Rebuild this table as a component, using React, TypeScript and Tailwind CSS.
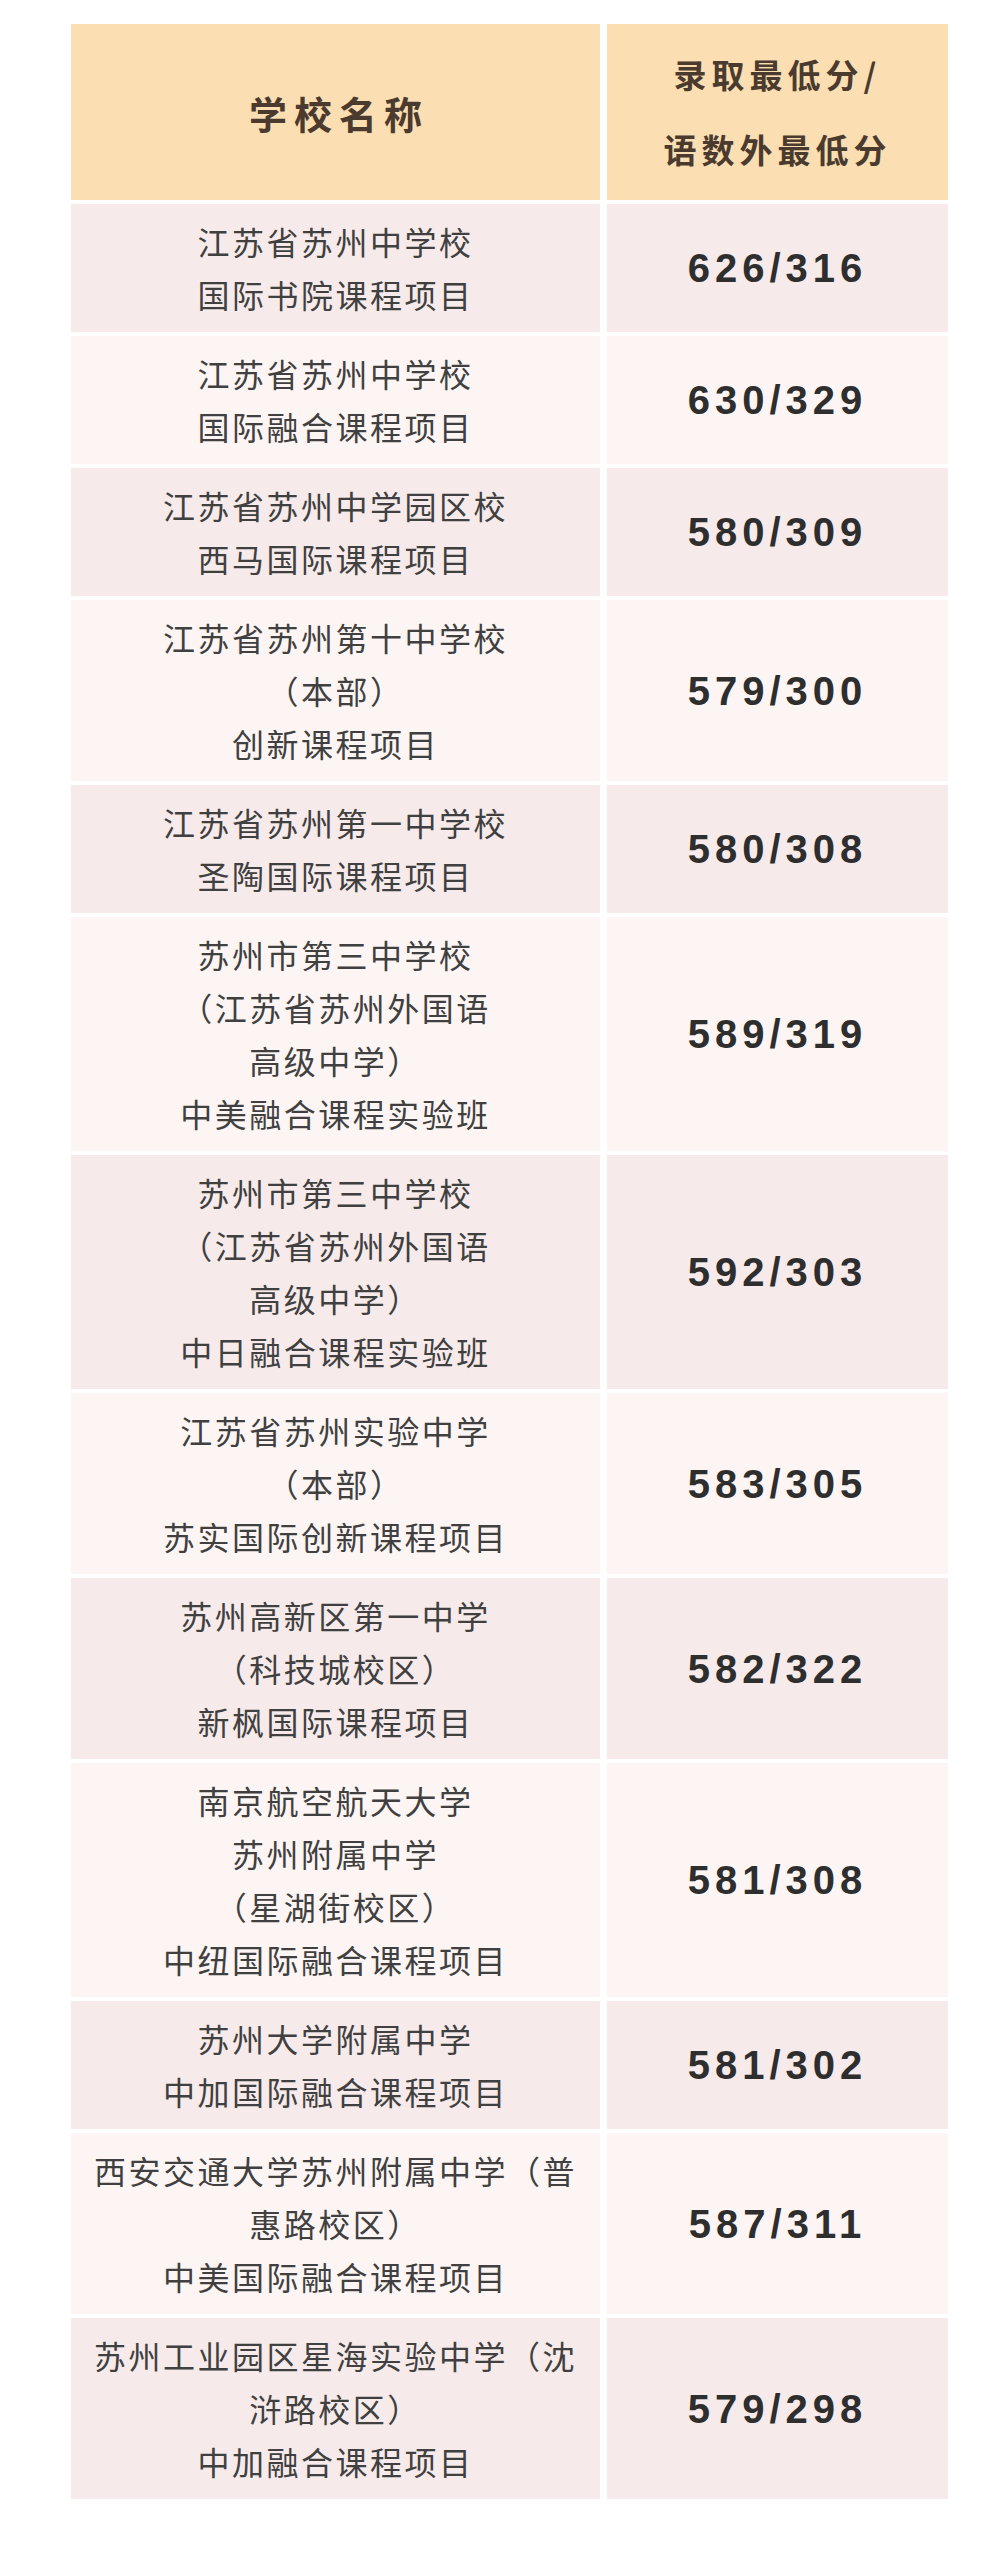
const rows = [
  { name: ["江苏省苏州中学校", "国际书院课程项目"], score: "626/316" },
  { name: ["江苏省苏州中学校", "国际融合课程项目"], score: "630/329" },
  { name: ["江苏省苏州中学园区校", "西马国际课程项目"], score: "580/309" },
  { name: ["江苏省苏州第十中学校", "（本部）", "创新课程项目"], score: "579/300" },
  { name: ["江苏省苏州第一中学校", "圣陶国际课程项目"], score: "580/308" },
  { name: ["苏州市第三中学校", "（江苏省苏州外国语", "高级中学）", "中美融合课程实验班"], score: "589/319" },
  { name: ["苏州市第三中学校", "（江苏省苏州外国语", "高级中学）", "中日融合课程实验班"], score: "592/303" },
  { name: ["江苏省苏州实验中学", "（本部）", "苏实国际创新课程项目"], score: "583/305" },
  { name: ["苏州高新区第一中学", "（科技城校区）", "新枫国际课程项目"], score: "582/322" },
  { name: ["南京航空航天大学", "苏州附属中学", "（星湖街校区）", "中纽国际融合课程项目"], score: "581/308" },
  { name: ["苏州大学附属中学", "中加国际融合课程项目"], score: "581/302" },
  { name: ["西安交通大学苏州附属中学（普", "惠路校区）", "中美国际融合课程项目"], score: "587/311" },
  { name: ["苏州工业园区星海实验中学（沈", "浒路校区）", "中加融合课程项目"], score: "579/298" },
];

function App() {
  return (
    <div className="min-h-[2560px] bg-white pt-[24px] pl-[71px] font-['Noto_Sans_CJK_SC',sans-serif]">
      <div className="grid w-[877px] grid-cols-[529px_341px] gap-x-[7px] gap-y-[4px]">
        {/* header */}
        <div className="flex h-[176px] items-center justify-center bg-[#fcdeb3] pl-[7px] text-[38px] font-bold tracking-[7px] text-[#4b3b2f]">
          学校名称
        </div>
        <div className="flex h-[176px] flex-col items-center justify-center bg-[#fcdeb3] text-[33px] font-bold leading-[75px] tracking-[5px] text-[#4b3b2f]">
          <span>录取最低分/</span>
          <span>语数外最低分</span>
        </div>

        {rows.map((row, i) => {
          const bg = i % 2 === 0 ? "bg-[#f6eaea]" : "bg-[#fdf5f3]";
          return [
            <div
              key={"n" + i}
              className={`${bg} flex flex-col items-center justify-center py-[11px] text-[32px] leading-[53px] tracking-[2.5px] text-[#404040]`}
            >
              {row.name.map((line, j) => (
                <span key={j}>{line}</span>
              ))}
            </div>,
            <div
              key={"s" + i}
              className={`${bg} flex items-center justify-center font-['Liberation_Sans',sans-serif] text-[40px] font-bold tracking-[5px] text-[#2e2e2e]`}
            >
              {row.score}
            </div>,
          ];
        })}
      </div>
    </div>
  );
}

export default App;
